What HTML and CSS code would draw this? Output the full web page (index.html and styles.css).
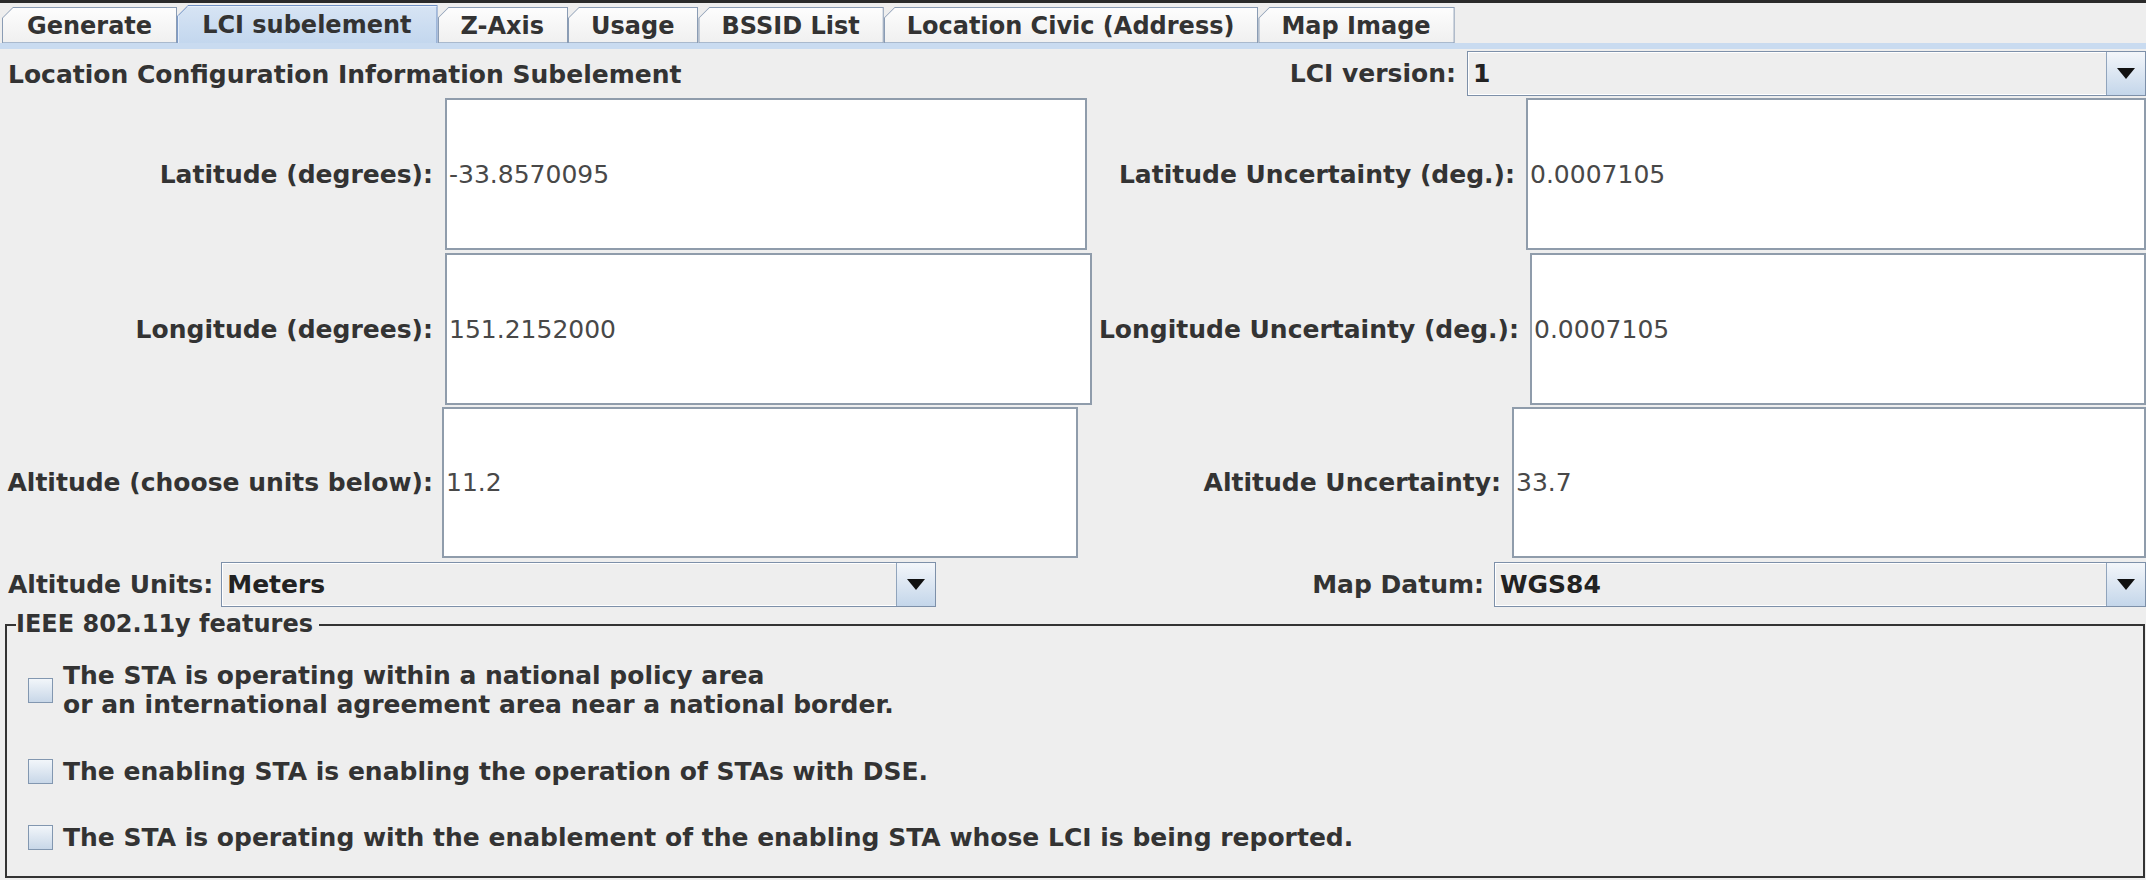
FILE: index.html
```html
<!DOCTYPE html>
<html>
<head>
<meta charset="utf-8">
<link rel="stylesheet" href="styles.css">
</head>
<body>
<div class="window">
  <div class="tabbar">
    <div class="tab first"><span class="tab-face">Generate</span></div>
    <div class="tab selected"><span class="tab-face">LCI subelement</span></div>
    <div class="tab"><span class="tab-face">Z-Axis</span></div>
    <div class="tab"><span class="tab-face">Usage</span></div>
    <div class="tab"><span class="tab-face">BSSID List</span></div>
    <div class="tab"><span class="tab-face">Location Civic (Address)</span></div>
    <div class="tab"><span class="tab-face">Map Image</span></div>
  </div>
  <div class="stripe"></div>
  <div class="content">
    <div class="header-row">
      <div class="title">Location Configuration Information Subelement</div>
      <div class="hdr-label">LCI version:</div>
      <div class="combo combo-version">
        <span class="combo-value">1</span>
        <span class="combo-btn"><svg width="18" height="11" viewBox="0 0 18 11"><polygon points="0,0 18,0 9,11" fill="#111"/></svg></span>
      </div>
    </div>

    <div class="field-row row-lat">
      <div class="lbl lbl-a">Latitude (degrees):</div>
      <div class="field field-a">-33.8570095</div>
      <div class="lbl lbl-b">Latitude Uncertainty (deg.):</div>
      <div class="field field-b">0.0007105</div>
    </div>
    <div class="field-row row-lon">
      <div class="lbl lbl-a">Longitude (degrees):</div>
      <div class="field field-a">151.2152000</div>
      <div class="lbl lbl-b">Longitude Uncertainty (deg.):</div>
      <div class="field field-b">0.0007105</div>
    </div>
    <div class="field-row row-alt">
      <div class="lbl lbl-a">Altitude (choose units below):</div>
      <div class="field field-a">11.2</div>
      <div class="lbl lbl-b">Altitude Uncertainty:</div>
      <div class="field field-b">33.7</div>
    </div>

    <div class="units-row">
      <div class="units-label">Altitude Units:</div>
      <div class="combo combo-units">
        <span class="combo-value">Meters</span>
        <span class="combo-btn"><svg width="18" height="11" viewBox="0 0 18 11"><polygon points="0,0 18,0 9,11" fill="#111"/></svg></span>
      </div>
      <div class="datum-label">Map Datum:</div>
      <div class="combo combo-datum">
        <span class="combo-value">WGS84</span>
        <span class="combo-btn"><svg width="18" height="11" viewBox="0 0 18 11"><polygon points="0,0 18,0 9,11" fill="#111"/></svg></span>
      </div>
    </div>

    <fieldset class="features">
      <legend>IEEE 802.11y features</legend>
      <div class="check-item">
        <span class="box"></span>
        <span class="check-text">The STA is operating within a national policy area<br>or an international agreement area near a national border.</span>
      </div>
      <div class="check-item">
        <span class="box"></span>
        <span class="check-text">The enabling STA is enabling the operation of STAs with DSE.</span>
      </div>
      <div class="check-item">
        <span class="box"></span>
        <span class="check-text">The STA is operating with the enablement of the enabling STA whose LCI is being reported.</span>
      </div>
    </fieldset>
  </div>
</div>
</body>
</html>
```

FILE: styles.css
```css
* { box-sizing: border-box; }
html, body { margin: 0; padding: 0; }
body {
  width: 2146px;
  height: 880px;
  overflow: hidden;
  background: #eeeeee;
  font-family: "DejaVu Sans", "Liberation Sans", sans-serif;
  font-weight: bold;
  font-size: 25px;
  color: #333;
}
.window {
  height: 880px;
  border-top: 3px solid #2a2a2a;
}

/* Tabs */
.tabbar {
  display: flex;
  align-items: flex-end;
  height: 40px;
  padding-left: 2px;
  font-size: 24px;
}
.tab {
  height: 36px;
  padding: 1px 1px 0 1px;
  background: #8a9cb4;
  clip-path: polygon(0 11px, 11px 0, 100% 0, 100% 100%, 0 100%);
  display: flex;
}
.tab-face {
  display: flex;
  align-items: center;
  padding: 1px 23px 0 22px;
  background: linear-gradient(#fdfdfd, #f0f0f0);
  clip-path: polygon(0 10px, 10px 0, 100% 0, 100% 100%, 0 100%);
  border-bottom: 1px solid #a9b9cd;
  color: #333;
}
.tab.first .tab-face {
  padding-left: 24px;
  padding-right: 24px;
}
.tab.selected {
  height: 38px;
  background: #6f90c4;
}
.tab.selected .tab-face {
  padding-left: 24px;
  padding-right: 25px;
  background: linear-gradient(#d7e4f4, #c3d7ee);
  border-bottom: none;
  box-shadow: inset 1px 1px 0 #e8f0fa;
}
.stripe {
  height: 6px;
  background: #c9dbf0;
}

/* Header */
.header-row {
  display: flex;
  align-items: center;
  height: 49px;
}
.title {
  flex: 1;
  padding-left: 8px;
  padding-top: 2px;
}
.hdr-label {
  padding-right: 11px;
}

/* Combo */
.combo {
  display: flex;
  height: 45px;
  border: 1px solid #7d90a9;
  background: #eeeeee;
  box-shadow: inset 0 0 0 1px #ffffff;
  color: #222;
}
.combo-version { width: 679px; }
.combo-units { width: 715px; margin-left: 8px; }
.combo-datum { width: 652px; }
.combo-value {
  flex: 1;
  display: flex;
  align-items: center;
  padding-left: 5px;
}
.combo-btn {
  width: 39px;
  border-left: 1px solid #90a4bc;
  background: linear-gradient(#f3f6fa, #c4d6ea);
  display: flex;
  align-items: center;
  justify-content: center;
}

/* Field rows */
.field-row {
  display: flex;
  align-items: center;
  height: 152px;
  margin-top: 3px;
}
.field-row.row-lat { margin-top: 0; --la: 437px; --fam: 8px; --fa: 642px; --fb: 620px; }
.field-row.row-lon { --la: 437px; --fam: 8px; --fa: 647px; --fb: 616px; }
.field-row.row-alt { height: 151px; margin-top: 2px; --la: 437px; --fam: 5px; --fa: 636px; --fb: 634px; }
.lbl { text-align: right; }
.lbl-a { width: var(--la); flex: none; padding-right: 4px; }
.lbl-b { flex: 1; padding-right: 11px; }
.field {
  height: 100%;
  background: #ffffff;
  border: 2px solid #8f9cab;
  display: flex;
  align-items: center;
  padding-left: 2px;
  font-weight: normal;
  color: #484848;
  flex: none;
}
.field-a { width: var(--fa); margin-left: var(--fam); }
.field-b { width: var(--fb); }

/* Units row */
.units-row {
  display: flex;
  align-items: center;
  height: 46px;
  margin-top: 3px;
  padding-left: 8px;
}
.datum-label {
  flex: 1;
  text-align: right;
  padding-right: 10px;
}

/* Features */
.features {
  margin: 3px 1px 0 5px;
  border: 2px solid #333;
  padding: 22px 20px 24px 21px;
  display: flex;
  flex-direction: column;
  gap: 37.5px;
  min-width: 0;
}
.features legend {
  margin-left: -12px;
  padding: 0 6px 0 0;
  line-height: 29px;
  font-size: 24px;
}
.check-item {
  display: flex;
  align-items: center;
  gap: 10px;
}
.check-text {
  line-height: 29px;
}
.box {
  width: 25px;
  height: 25px;
  flex: none;
  border: 1px solid #8297b0;
  background: linear-gradient(#f2f6fa, #c8d7e8);
}
```
